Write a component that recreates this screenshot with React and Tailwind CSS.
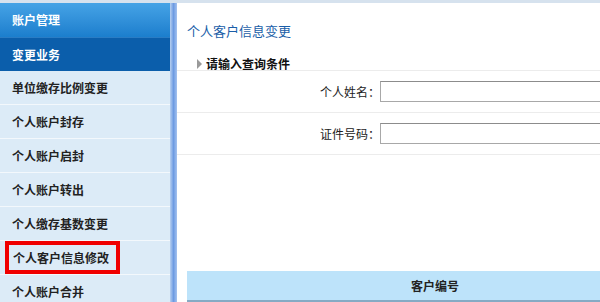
import React from 'react';

const menuItems = [
  '单位缴存比例变更',
  '个人账户封存',
  '个人账户启封',
  '个人账户转出',
  '个人缴存基数变更',
  '个人客户信息修改',
  '个人账户合并',
];

const fields = ['个人姓名：', '证件号码：'];

export default function App() {
  return (
    <div
      className="w-[600px] h-[302px] overflow-hidden bg-white flex flex-col"
      style={{ fontFamily: '"Noto Sans CJK SC", "Noto Sans", sans-serif' }}
    >
      {/* top strip */}
      <div className="h-[3px] bg-[#d6e2ee] shrink-0"></div>

      <div className="flex flex-1 min-h-0 overflow-hidden">
        {/* Sidebar */}
        <div className="w-[170px] shrink-0 bg-[#dcebf7] flex flex-col overflow-hidden">
          <div className="h-[34px] shrink-0 flex items-center pl-[12px] bg-gradient-to-b from-[#45a3e6] to-[#1b7ecd] text-white text-[12px] font-bold">
            账户管理
          </div>
          <div className="h-[34px] shrink-0 flex items-center pl-[12px] bg-[#0b5eab] border-t border-[#2a7cc4] text-white text-[12px] font-bold">
            变更业务
          </div>
          {menuItems.map((item) => (
            <div
              key={item}
              className="h-[34px] shrink-0 flex items-center border-b border-[#f3f8fc] text-[12px] font-bold text-[#222]"
            >
              {item === '个人客户信息修改' ? (
                <span className="ml-[5px] h-[33px] w-[115px] flex items-center pl-[4px] border-[4px] border-[#f00000]">
                  {item}
                </span>
              ) : (
                <span className="pl-[12px]">{item}</span>
              )}
            </div>
          ))}
        </div>

        {/* splitter */}
        <div className="w-[7px] shrink-0 bg-gradient-to-r from-[#b8d0f0] via-[#6d9be2] to-[#a4c2ef]"></div>

        {/* Content */}
        <div className="flex-1 min-w-0 flex flex-col overflow-hidden">
          <div className="pl-[10px] pt-[20px] text-[13px] leading-[16px] text-[#1a5ea8]">
            个人客户信息变更
          </div>

          <div className="h-[32px] shrink-0 flex items-end pl-[20px] border-b border-[#ececec]">
            <span className="w-0 h-0 border-y-[5px] border-y-transparent border-l-[5px] border-l-[#9a9a9a] mr-[4px] mb-[1px]"></span>
            <span className="text-[12px] leading-[12px] font-bold text-[#111]">请输入查询条件</span>
          </div>

          {fields.map((f) => (
            <div key={f} className="h-[42px] shrink-0 flex items-center border-b border-[#ececec]">
              <span className="w-[203px] shrink-0 text-right text-[12px] text-[#222]">{f}</span>
              <div className="w-[240px] h-[21px] shrink-0 border border-[#a8a8a8] border-t-[#8c8c8c] bg-white"></div>
            </div>
          ))}

          <div className="flex-1"></div>

          <div className="ml-[10px] h-[31px] shrink-0 bg-[#bde3fa] border-b-2 border-[#86aac4] flex items-center text-[12px] font-bold text-[#222] whitespace-nowrap">
            <span className="w-[496px] shrink-0 text-center">客户编号</span>
            <span className="shrink-0">个人姓名</span>
          </div>
        </div>
      </div>
    </div>
  );
}
